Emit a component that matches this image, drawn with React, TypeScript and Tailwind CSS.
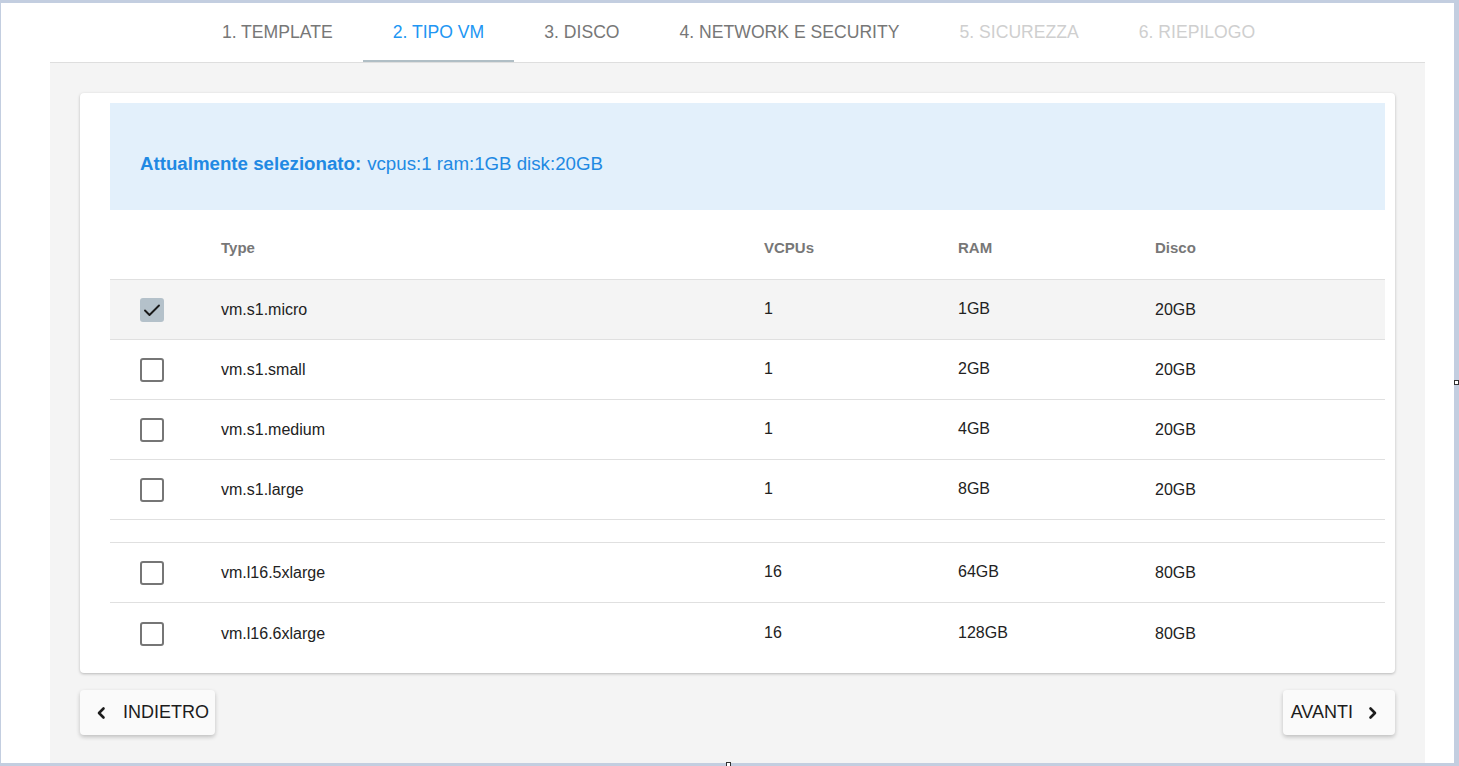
import React from "react";

const TABS = [
  { label: "1. TEMPLATE", state: "done" },
  { label: "2. TIPO VM", state: "active" },
  { label: "3. DISCO", state: "done" },
  { label: "4. NETWORK E SECURITY", state: "done" },
  { label: "5. SICUREZZA", state: "disabled" },
  { label: "6. RIEPILOGO", state: "disabled" }
];

type Row = { name: string; vcpus: string; ram: string; disk: string; checked?: boolean } | null;

const ROWS: Row[] = [
  { name: "vm.s1.micro", vcpus: "1", ram: "1GB", disk: "20GB", checked: true },
  { name: "vm.s1.small", vcpus: "1", ram: "2GB", disk: "20GB" },
  { name: "vm.s1.medium", vcpus: "1", ram: "4GB", disk: "20GB" },
  { name: "vm.s1.large", vcpus: "1", ram: "8GB", disk: "20GB" },
  null,
  { name: "vm.l16.5xlarge", vcpus: "16", ram: "64GB", disk: "80GB" },
  { name: "vm.l16.6xlarge", vcpus: "16", ram: "128GB", disk: "80GB" }
];

const GRID = "grid grid-cols-[111px_543px_194px_197px_1fr] items-center";

function Checkbox({ checked }: { checked?: boolean }) {
  if (checked) {
    return (
      <span className="flex h-[24px] w-[24px] items-center justify-center rounded-[3px] bg-[#b4c1ca]">
        <svg width="24" height="24" viewBox="0 0 24 24" fill="none">
          <path d="M5 12.5l4.5 4.5L19 7.5" stroke="#1a1a1a" strokeWidth="1.9" strokeLinecap="round" strokeLinejoin="round" />
        </svg>
      </span>
    );
  }
  return <span className="block h-[24px] w-[24px] rounded-[3px] border-2 border-[#767676] bg-white" />;
}

function Chevron({ dir }: { dir: "left" | "right" }) {
  return (
    <svg width="12" height="14" viewBox="0 0 12 14" fill="none">
      <path
        d={dir === "left" ? "M8.5 2.5L4 7l4.5 4.5" : "M3.5 2.5L8 7l-4.5 4.5"}
        stroke="#1c1c1c"
        strokeWidth="2.6"
        strokeLinecap="round"
        strokeLinejoin="round"
      />
    </svg>
  );
}

export default function App() {
  return (
    <div
      className="relative h-[766px] w-[1459px] overflow-hidden bg-[#c3cee0] pb-[3px] pl-[1px] pr-[5px] pt-[3px]"
      style={{ fontFamily: '"Liberation Sans", Arial, sans-serif' }}
    >
      <div className="flex h-full flex-col bg-white pl-[51px] pr-[29px]">
        {/* stepper */}
        <nav className="flex h-[59px] justify-center">
          {TABS.map((t) => (
            <div
              key={t.label}
              className={
                "flex items-center px-[30px] pt-[2px] text-[17.6px] " +
                (t.state === "active"
                  ? "border-b-2 border-[#b0bec5] text-[#2196f3]"
                  : t.state === "disabled"
                  ? "border-b-2 border-transparent text-[#cfcfcf]"
                  : "border-b-2 border-transparent text-[#777]")
              }
            >
              {t.label}
            </div>
          ))}
        </nav>

        <div className="-ml-[2px] flex-1 border-t border-[#dedede] bg-[#f4f4f4] px-[30px] pt-[30px]">
          <div className="h-[580px] rounded-[4px] bg-white pb-[10px] pl-[30px] pr-[10px] pt-[10px] shadow-[0_1px_3px_rgba(0,0,0,0.25)]">
            <div className="flex h-[107px] items-center bg-[#e3f0fb] pl-[30px] pt-[15px] text-[18.7px] text-[#2189e3]">
              <span className="font-bold">Attualmente selezionato:</span>
              <span className="ml-[6px]">vcpus:1 ram:1GB disk:20GB</span>
            </div>

            <div className={GRID + " h-[70px] border-b border-[#e0e0e0] pt-[7px] text-[15px] font-bold text-[#777]"}>
              <span />
              <span>Type</span>
              <span>VCPUs</span>
              <span>RAM</span>
              <span>Disco</span>
            </div>

            {ROWS.map((r, i) =>
              r === null ? (
                <div key={i} className="h-[23px] border-b border-[#e0e0e0]" />
              ) : (
                <div
                  key={r.name}
                  className={
                    GRID +
                    " h-[60px] pt-[1px] text-[16px] text-[#222] " +
                    (i < ROWS.length - 1 ? "border-b border-[#e0e0e0] " : "") +
                    (r.checked ? "bg-[#f4f4f4]" : "")
                  }
                >
                  <span className="pl-[30px]">
                    <Checkbox checked={r.checked} />
                  </span>
                  <span>{r.name}</span>
                  <span className="-mt-[2px]">{r.vcpus}</span>
                  <span className="-mt-[2px]">{r.ram}</span>
                  <span>{r.disk}</span>
                </div>
              )
            )}
          </div>

          <div className="mt-[17px] flex justify-between">
            <button className="flex h-[45px] items-center gap-[16px] rounded-[4px] bg-[#fafafa] pl-[15px] pr-[6px] text-[18px] text-[#1c1c1c] shadow-[0_2px_4px_rgba(0,0,0,0.22)]">
              <Chevron dir="left" />
              INDIETRO
            </button>
            <button className="flex h-[45px] items-center gap-[14px] rounded-[4px] bg-[#fafafa] pl-[8px] pr-[16px] text-[18px] text-[#1c1c1c] shadow-[0_2px_4px_rgba(0,0,0,0.22)]">
              AVANTI
              <Chevron dir="right" />
            </button>
          </div>
        </div>
      </div>

      {/* window resize handles */}
      <span className="absolute left-[1454px] top-[380px] h-[5px] w-[5px] border border-[#333] bg-white" />
      <span className="absolute left-[726px] top-[762px] h-[5px] w-[5px] border border-[#333] bg-white" />
    </div>
  );
}
